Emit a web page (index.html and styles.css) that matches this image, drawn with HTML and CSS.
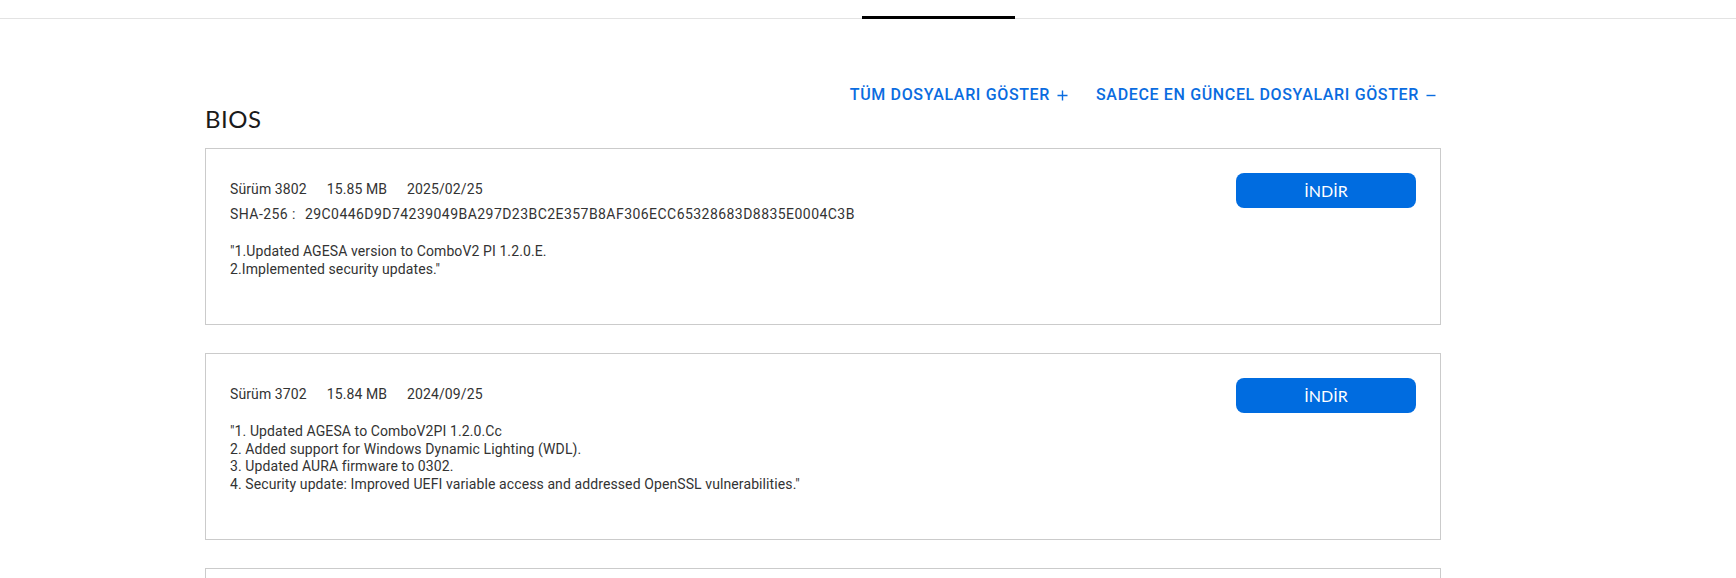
FILE: index.html
```html
<!DOCTYPE html>
<html lang="tr">
<head>
    <meta charset="UTF-8">
    <meta name="viewport" content="width=device-width, initial-scale=1.0">
    <title>BIOS</title>
    <link rel="stylesheet" href="styles.css">
</head>
<body>
    <div class="tabs">
        <div class="tab active"></div>
    </div>
    <div class="page">
        <div class="section-head">
            <div class="file-toggle">
                <a href="#">TÜM DOSYALARI GÖSTER
                    <svg width="11" height="11" viewBox="0 0 11 11"><path d="M5.5 0.5v10M0.5 5.5h10" stroke="currentColor" stroke-width="1.4" fill="none"/></svg>
                </a>
                <a href="#">SADECE EN GÜNCEL DOSYALARI GÖSTER
                    <svg width="10" height="11" viewBox="0 0 10 11"><path d="M0.5 5.5h9" stroke="currentColor" stroke-width="1.4" fill="none"/></svg>
                </a>
            </div>
            <h2>BIOS</h2>
        </div>

        <div class="file-list">
            <div class="file-card">
                <div class="file-info">
                    <div class="meta">
                        <span>Sürüm 3802</span>
                        <span>15.85 MB</span>
                        <span>2025/02/25</span>
                    </div>
                    <div class="sha">SHA-256 : <span class="hash">29C0446D9D74239049BA297D23BC2E357B8AF306ECC65328683D8835E0004C3B</span></div>
                    <p class="desc">"1.Updated AGESA version to ComboV2 PI 1.2.0.E.<br>2.Implemented security updates."</p>
                </div>
                <button type="button" class="btn-download">İNDİR</button>
            </div>

            <div class="file-card">
                <div class="file-info">
                    <div class="meta">
                        <span>Sürüm 3702</span>
                        <span>15.84 MB</span>
                        <span>2024/09/25</span>
                    </div>
                    <p class="desc">"1. Updated AGESA to ComboV2PI 1.2.0.Cc<br>2. Added support for Windows Dynamic Lighting (WDL).<br>3. Updated AURA firmware to 0302.<br>4. Security update: Improved UEFI variable access and addressed OpenSSL vulnerabilities."</p>
                </div>
                <button type="button" class="btn-download">İNDİR</button>
            </div>

            <div class="file-card">
                <div class="file-info">
                    <div class="meta">
                        <span>Sürüm 3603</span>
                        <span>15.83 MB</span>
                        <span>2024/08/16</span>
                    </div>
                    <p class="desc">"Improved system stability."</p>
                </div>
                <button type="button" class="btn-download">İNDİR</button>
            </div>
        </div>
    </div>
</body>
</html>
```

FILE: styles.css
```css
body {
    margin: 0;
    padding: 0;
    font-family: Roboto, "Liberation Sans", Arial, sans-serif;
    color: #333;
    background-color: #fff;
}
.tabs {
    display: flex;
    height: 18px;
    border-bottom: 1px solid #e3e3e3;
}
.tab {
    margin-left: 862px;
    width: 153px;
    height: 16px;
}
.tab.active {
    border-bottom: 3px solid #000;
}
.page {
    width: 1236px;
    margin-left: 205px;
    padding-top: 66px;
}
.file-toggle {
    display: flex;
    justify-content: flex-end;
    gap: 28px;
    padding-right: 5px;
    line-height: 20px;
}
.file-toggle a {
    display: flex;
    align-items: center;
    gap: 7px;
    color: #0a6ce0;
    font-size: 16px;
    font-weight: 500;
    letter-spacing: 0.65px;
    text-decoration: none;
}
.section-head h2 {
    margin: 0 0 15px;
    font-family: Lato, Roboto, sans-serif;
    font-size: 24px;
    font-weight: 400;
    line-height: 28px;
    letter-spacing: 0.5px;
    color: #1a1a1a;
}
.file-card {
    display: flex;
    align-items: flex-start;
    border: 1px solid #cbcbcb;
    padding: 24px 24px 46px;
    margin-bottom: 28px;
}
.file-info {
    flex: 1;
    font-size: 14px;
}
.meta {
    display: flex;
    margin-top: 6px;
    line-height: 20px;
    letter-spacing: 0.1px;
}
.meta span {
    margin-right: 20px;
}
.sha {
    margin-top: 5px;
    line-height: 20px;
    letter-spacing: 0.45px;
}
.hash {
    margin-left: 5px;
}
.desc {
    margin: 19px 0 0;
    line-height: 17.5px;
    letter-spacing: 0.1px;
}
.btn-download {
    flex-shrink: 0;
    width: 180px;
    height: 35px;
    padding: 0;
    border: none;
    border-radius: 8px;
    background-color: #006ce0;
    color: #fff;
    font-family: Lato, Roboto, sans-serif;
    font-size: 16px;
    cursor: pointer;
}
```
